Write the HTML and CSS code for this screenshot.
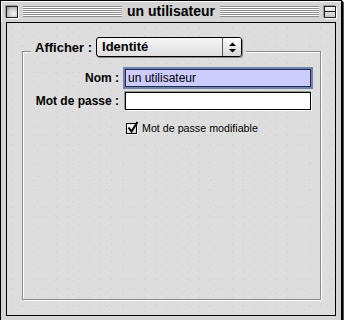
FILE: index.html
```html
<!DOCTYPE html>
<html lang="fr">
<head>
    <meta charset="UTF-8">
    <meta name="viewport" content="width=device-width, initial-scale=1.0">
    <title>un utilisateur</title>
    <link rel="stylesheet" href="styles.css">
</head>
<body>
    <div class="window">
        <div class="titlebar">
            <span class="wbox close"></span>
            <span class="stripes"></span>
            <span class="title">un utilisateur</span>
            <span class="stripes"></span>
            <span class="wbox shade"></span>
        </div>

        <div class="content">
            <div class="group">
                <div class="group-head">
                    <span class="head-label">Afficher :</span>
                    <div class="popup">
                        <span class="popup-text">Identité</span>
                        <span class="popup-arrows">
                            <svg width="7" height="11" viewBox="0 0 7 11">
                                <polygon points="0,4 3.5,0.5 7,4" fill="#000"/>
                                <polygon points="0,7 3.5,10.5 7,7" fill="#000"/>
                            </svg>
                        </span>
                    </div>
                </div>

                <div class="form">
                    <span class="lbl">Nom :</span>
                    <div class="field focused">un utilisateur</div>

                    <span class="lbl">Mot de passe :</span>
                    <div class="field"></div>

                    <span></span>
                    <div class="check-row">
                        <span class="checkbox">
                            <svg width="13" height="13" viewBox="0 0 13 13">
                                <polyline points="2.5,6.5 5.5,10.5 11.5,1" fill="none" stroke="#000" stroke-width="2"/>
                            </svg>
                        </span>
                        Mot de passe modifiable
                    </div>
                </div>
            </div>
        </div>
    </div>
</body>
</html>
```

FILE: styles.css
```css
body {
    margin: 0;
    background: #eeeeee;
    font-family: "Liberation Sans", Arial, sans-serif;
}

.window {
    width: 330px;
    height: 315px;
    border: 1px solid #000;
    box-shadow: 1px 1px 0 #000, 2px 2px 0 #555;
    background: #d4d4d4;
    display: flex;
    flex-direction: column;
    padding: 0 5px 4px 5px;
}

/* title bar */
.titlebar {
    height: 21px;
    display: flex;
    align-items: center;
    margin: 0 -5px;
    padding: 0 5px;
    box-shadow: inset 1px 1px 0 #fff;
}

.wbox {
    width: 10px;
    height: 10px;
    border: 1px solid #222;
    box-shadow: 1px 1px 0 #fff, -1px -1px 0 #999;
    flex: none;
}

.close {
    background: radial-gradient(circle at 65% 65%, #f4f4f4 0, #c8c8c8 55%, #8a8a8a 100%);
}

.shade {
    background: linear-gradient(#f2f2f2, #c8c8c8);
    position: relative;
}

.shade::after {
    content: "";
    position: absolute;
    left: 0;
    right: 0;
    top: 4px;
    border-top: 1px solid #222;
}

.stripes {
    flex: 1;
    height: 11px;
    margin: 0 5px;
    background: repeating-linear-gradient(#8c8c8c 0 1px, #fff 1px 2px);
}

.stripes:first-of-type {
    margin-left: 6px;
}

.title {
    font-weight: bold;
    font-size: 14px;
    padding: 0 0 1px;
    color: #000;
}

/* content panel */
.content {
    flex: 1;
    border: 1px solid #000;
    background-color: #dddddd;
    background-image:
        radial-gradient(circle, #cbcbcb 0.6px, transparent 0.9px),
        radial-gradient(circle, #cfcfcf 0.6px, transparent 0.9px);
    background-size: 11px 9px, 17px 13px;
    background-position: 0 0, 6px 4px;
    display: flex;
    flex-direction: column;
}

.group {
    flex: 1;
    margin: 28px 14px 15px 15px;
    border: 1px solid #888;
    box-shadow: 1px 1px 0 #fff, inset 1px 1px 0 #fff;
    display: flex;
    flex-direction: column;
}

.group-head {
    align-self: flex-start;
    margin: -15px 0 0 8px;
    padding: 0 4px;
    display: flex;
    align-items: center;
    gap: 4px;
    background: #dddddd;
}

.head-label {
    font-weight: bold;
    font-size: 13px;
}

.popup {
    width: 146px;
    height: 20px;
    box-sizing: border-box;
    border: 1px solid #000;
    border-radius: 3px;
    background: linear-gradient(#f6f6f6, #dedede);
    box-shadow: 1px 1px 0 #888;
    display: flex;
}

.popup-text {
    flex: 1;
    padding-left: 5px;
    font-weight: bold;
    font-size: 13px;
    line-height: 18px;
}

.popup-arrows {
    width: 18px;
    border-left: 1px solid #555;
    display: flex;
    align-items: center;
    justify-content: center;
    background: linear-gradient(#fafafa, #d8d8d8);
    border-radius: 0 2px 2px 0;
}

/* form */
.form {
    display: grid;
    grid-template-columns: 96px 1fr;
    column-gap: 6px;
    row-gap: 5px;
    margin-top: 12px;
    padding-right: 9px;
    align-items: center;
}

.lbl {
    text-align: right;
    font-weight: bold;
    font-size: 12px;
}

.field {
    height: 18px;
    box-sizing: border-box;
    border: 1px solid #000;
    background: #fff;
    box-shadow: -1px -1px 0 #999, 1px 1px 0 #fff;
    font-size: 12px;
    line-height: 16px;
    padding-left: 2px;
}

.field.focused {
    background: #ccccff;
    border-color: #1e2850;
    box-shadow: 0 0 0 2px #7183ad;
}

.check-row {
    margin: 7px 0 0 1px;
    display: flex;
    align-items: center;
    gap: 5px;
    font-size: 10.7px;
}

.checkbox {
    width: 9px;
    height: 9px;
    border: 1px solid #000;
    background: linear-gradient(135deg, #fff, #d0d0d0);
    box-shadow: 1px 1px 0 #fff;
    position: relative;
}

.checkbox svg {
    position: absolute;
    left: -1px;
    top: -3px;
}
```
